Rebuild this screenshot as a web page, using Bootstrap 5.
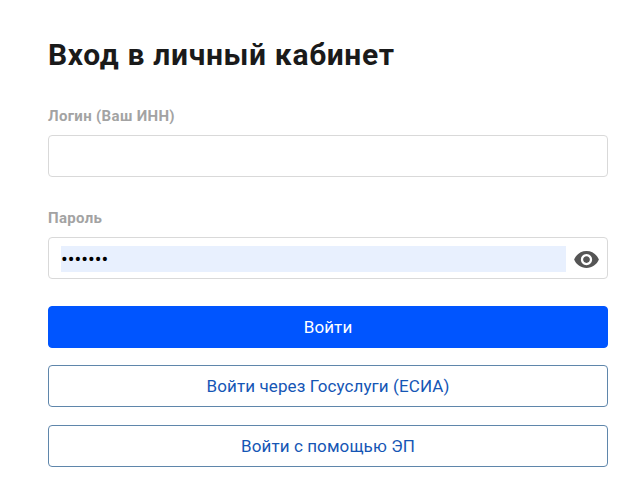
<!DOCTYPE html>
<html lang="ru">
<head>
<meta charset="utf-8">
<title>Вход</title>
<link href="https://cdn.jsdelivr.net/npm/bootstrap@5.3.0/dist/css/bootstrap.min.css" rel="stylesheet">
<style>
body { font-family: Roboto, sans-serif; background: #fff; overflow: hidden; }
.login-wrap { width: 560px; margin-left: 48px; padding-top: 37px; }
.login-title { font-size: 30px; font-weight: 700; line-height: 36px; color: #1a1a1a; margin: 0 0 34px; letter-spacing: .67px; }
.field-label { font-size: 15px; font-weight: 700; line-height: 17px; color: #a3a3a3; margin: 0 0 10px; padding-top: 1px; display: block; letter-spacing: .33px; }
.field-box { height: 42px; border: 1px solid #d9d9d9; border-radius: 4px; padding: 2px 7px 0 12px; margin-bottom: 32px; }
.field-box.last-box { margin-bottom: 27px; }
.pw-fill { height: 26px; background: #e8f0fe; color: #000; font-size: 20px; letter-spacing: 0; line-height: 26px; border: 0; padding: 0; width: 505px; border-radius: 0; }
.pw-fill:focus { outline: 0; box-shadow: none; background: #e8f0fe; }
.plain-input { border: 0; width: 100%; height: 100%; outline: 0; background: transparent; }
.act-btn { height: 42px; width: 100%; font-size: 17px; line-height: 1; letter-spacing: .1px; border-radius: 4px; display: flex; align-items: center; justify-content: center; }
.act-primary { background: #0055ff; border-color: #0055ff; color: #fff; margin-bottom: 17px; }
.act-outline { background: #fff; border: 1px solid #5f86ab; color: #1556b5; margin-bottom: 18px; }
</style>
</head>
<body>
<main class="login-wrap">
  <h1 class="login-title">Вход в личный кабинет</h1>
  <form>
    <label class="field-label" for="lg">Логин (Ваш ИНН)</label>
    <div class="field-box d-flex align-items-center"><input id="lg" class="plain-input" type="text"></div>
    <label class="field-label" for="pw">Пароль</label>
    <div class="field-box last-box d-flex align-items-center justify-content-between">
      <input id="pw" class="pw-fill" type="password" value="1234567">
      <svg width="27" height="27" viewBox="0 0 24 24" fill="#555" aria-hidden="true"><path d="M12 4.5C7 4.5 2.73 7.61 1 12c1.73 4.39 6 7.5 11 7.5s9.27-3.11 11-7.5c-1.73-4.39-6-7.5-11-7.5zM12 17c-2.76 0-5-2.24-5-5s2.24-5 5-5 5 2.24 5 5-2.24 5-5 5zm0-8c-1.66 0-3 1.34-3 3s1.34 3 3 3 3-1.34 3-3-1.34-3-3-3z"/></svg>
    </div>
    <button type="button" class="btn act-btn act-primary">Войти</button>
    <button type="button" class="btn act-btn act-outline">Войти через Госуслуги (ЕСИА)</button>
    <button type="button" class="btn act-btn act-outline">Войти с помощью ЭП</button>
  </form>
</main>
<script src="https://cdn.jsdelivr.net/npm/bootstrap@5.3.0/dist/js/bootstrap.bundle.min.js"></script>
</body>
</html>
